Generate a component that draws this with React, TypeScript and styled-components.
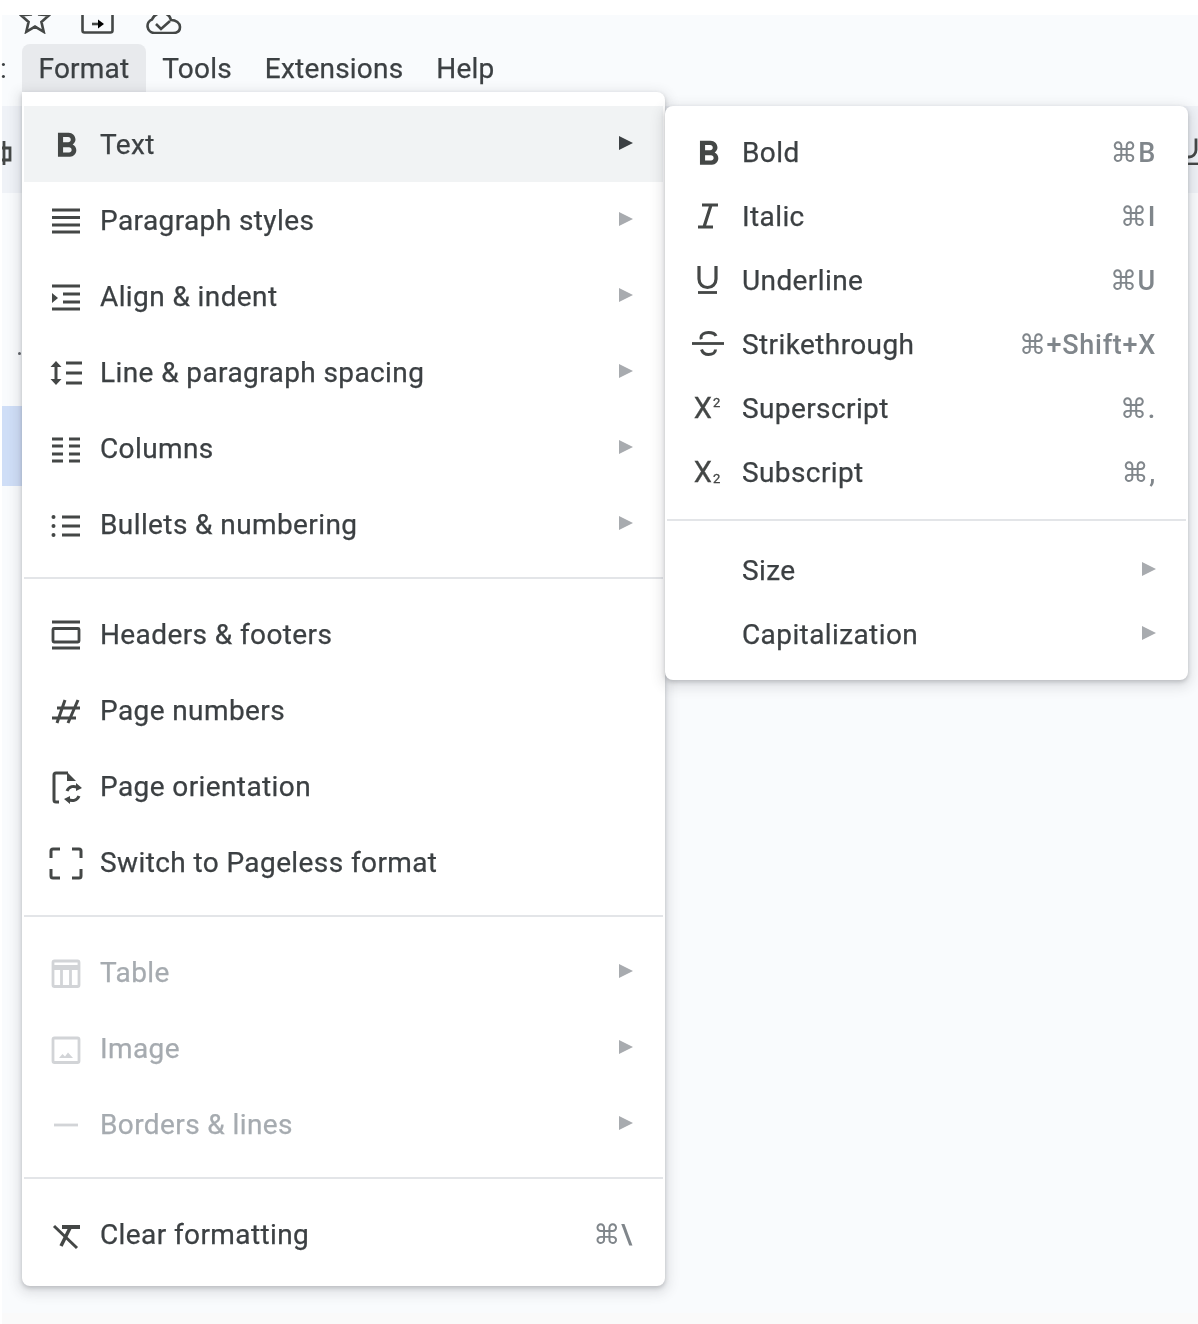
import type { ReactNode } from "react";
import styled, { createGlobalStyle } from "styled-components";
import { MdFormatBold } from "react-icons/md";

const GlobalStyle = createGlobalStyle`
  html, body {
    margin: 0;
    padding: 0;
    background: #ffffff;
  }
  #root {
    width: 1198px;
    height: 1324px;
    overflow: hidden;
  }
`;

type IconName =
  | "bold" | "paragraph" | "align" | "spacing" | "columns" | "bullets"
  | "headers" | "hash" | "orientation" | "pageless" | "table" | "image"
  | "border" | "clear" | "italic" | "underline" | "strike" | "sup" | "sub";

const drawings: Partial<Record<IconName, ReactNode>> = {
  paragraph: <path d="M6 10h28M6 17.5h28M6 25h28M6 32h28" />,
  align: (
    <>
      <path d="M6 10h28M17 18h17M17 26h17M6 33h28" />
      <path d="M6 17l6 5-6 5z" fill="currentColor" stroke="none" />
    </>
  ),
  spacing: (
    <>
      <path d="M20 11h16M20 21h16M20 31h16" />
      <path d="M10 13v16" strokeWidth="3" />
      <path d="M4.5 15L10 9l5.500 6zM4.500 27L10 33l5.500-6z" fill="currentColor" stroke="none" />
    </>
  ),
  columns: <path d="M6 11h11M6 18h11M6 26h11M6 33h11M23 11h11M23 18h11M23 26h11M23 33h11" />,
  bullets: (
    <>
      <path d="M16 13h18M16 22h18M16 31h18" />
      <g fill="currentColor" stroke="none">
        <circle cx="7.500" cy="13" r="2" />
        <circle cx="7.500" cy="22" r="2" />
        <circle cx="7.500" cy="31" r="2" />
      </g>
    </>
  ),
  headers: (
    <>
      <path d="M6 8h28M6 34h28" />
      <rect x="7" y="14.500" width="26" height="13.500" rx="1" />
    </>
  ),
  hash: <path d="M19 10l-8 23M32 10l-10 23M11 18h23M6 28h24" strokeWidth="3" />,
  orientation: (
    <>
      <path d="M13 36h-3a2 2 0 0 1-2-2V9a2 2 0 0 1 2-2h12" strokeWidth="3" />
      <path d="M21 6l9 9h-9z" fill="currentColor" stroke="none" />
      <path d="M21 25a7 7 0 0 1 11-3M33 30a7 7 0 0 1-11 3" strokeWidth="3" />
      <path d="M30 17l6 5-6 3zM24 38l-6-5 6-3z" fill="currentColor" stroke="none" />
    </>
  ),
  pageless: (
    <path
      d="M5 16V9a2 2 0 0 1 2-2h7M26 7h7a2 2 0 0 1 2 2v7M35 27v7a2 2 0 0 1-2 2h-7M14 36H7a2 2 0 0 1-2-2v-7"
      strokeWidth="3"
    />
  ),
  table: (
    <>
      <rect x="7" y="9" width="26" height="25.500" rx="1.500" />
      <path d="M7 15.500h26" strokeWidth="5" />
      <path d="M15.500 17v17M24.500 17v17" />
    </>
  ),
  image: (
    <>
      <rect x="7" y="10" width="26" height="24.500" rx="1.500" />
      <path d="M13 30l3.500-4 2.500 2.500 3-4 5 5.500z" fill="currentColor" stroke="none" />
    </>
  ),
  border: <path d="M8 21h24" />,
  clear: (
    <>
      <path d="M16 13h18" strokeWidth="4" />
      <path d="M8 12l23 22" strokeWidth="3" />
      <path d="M24 14l-9 18" strokeWidth="3.500" />
    </>
  ),
  italic: <path d="M14 9h16M10 31h15M23 9l-7 22" strokeWidth="3.200" />,
  underline: (
    <>
      <path d="M11 6v13a8.500 8.500 0 0 0 17 0V6" strokeWidth="3.200" />
      <path d="M10 32.500h19" strokeWidth="2.800" />
    </>
  ),
  strike: (
    <>
      <path d="M4 19.500h32" strokeWidth="2.800" />
      <path d="M28 12c-1-2.500-3.800-3.500-7.500-3.500-4.500 0-7.500 2-7.500 5 0 .6.100 1.200.3 1.700" strokeWidth="3" />
      <path d="M13.500 25.500c1 3 3.500 5 7 5 4.500 0 7-2.200 7-5" strokeWidth="3" />
    </>
  ),
};

function ItemIcon({ name }: { name: IconName }) {
  if (name === "bold") {
    return <BoldIcon size={41} />;
  }
  if (name === "sup") {
    return (
      <ScriptIcon>
        X<Raised>2</Raised>
      </ScriptIcon>
    );
  }
  if (name === "sub") {
    return (
      <ScriptIcon>
        X<Lowered>2</Lowered>
      </ScriptIcon>
    );
  }
  return <LineIcon viewBox="0 0 40 40">{drawings[name]}</LineIcon>;
}

type Item = {
  label: string;
  icon?: IconName;
  shortcut?: string;
  arrow?: boolean;
  disabled?: boolean;
  active?: boolean;
};

const formatGroups: Item[][] = [
  [
    { label: "Text", icon: "bold", arrow: true, active: true },
    { label: "Paragraph styles", icon: "paragraph", arrow: true },
    { label: "Align & indent", icon: "align", arrow: true },
    { label: "Line & paragraph spacing", icon: "spacing", arrow: true },
    { label: "Columns", icon: "columns", arrow: true },
    { label: "Bullets & numbering", icon: "bullets", arrow: true },
  ],
  [
    { label: "Headers & footers", icon: "headers" },
    { label: "Page numbers", icon: "hash" },
    { label: "Page orientation", icon: "orientation" },
    { label: "Switch to Pageless format", icon: "pageless" },
  ],
  [
    { label: "Table", icon: "table", arrow: true, disabled: true },
    { label: "Image", icon: "image", arrow: true, disabled: true },
    { label: "Borders & lines", icon: "border", arrow: true, disabled: true },
  ],
  [{ label: "Clear formatting", icon: "clear", shortcut: "⌘\\" }],
];

const textGroups: Item[][] = [
  [
    { label: "Bold", icon: "bold", shortcut: "⌘B" },
    { label: "Italic", icon: "italic", shortcut: "⌘I" },
    { label: "Underline", icon: "underline", shortcut: "⌘U" },
    { label: "Strikethrough", icon: "strike", shortcut: "⌘+Shift+X" },
    { label: "Superscript", icon: "sup", shortcut: "⌘." },
    { label: "Subscript", icon: "sub", shortcut: "⌘," },
  ],
  [
    { label: "Size", arrow: true },
    { label: "Capitalization", arrow: true },
  ],
];

function MenuRows({ groups, compact }: { groups: Item[][]; compact?: boolean }) {
  return (
    <>
      {groups.map((group, index) => (
        <div key={group[0].label}>
          {index > 0 && <Divider />}
          {group.map((item) => (
            <Row key={item.label} $compact={compact} $active={item.active} $disabled={item.disabled}>
              <IconSlot>{item.icon && <ItemIcon name={item.icon} />}</IconSlot>
              <Label>{item.label}</Label>
              {item.shortcut && <Shortcut>{item.shortcut}</Shortcut>}
              {item.arrow && <Arrow $active={item.active} />}
            </Row>
          ))}
        </div>
      ))}
    </>
  );
}

export default function App() {
  return (
    <>
      <GlobalStyle />
      <Page>
        <Frame>
          <TitleIcons>
            <TopIcon viewBox="0 0 32 32" width="32" height="32">
              <path d="M16 3l4 9.500 10 .8-7.600 6.600 2.300 9.900L16 24.600 7.300 29.800l2.300-9.900L2 13.300l10-.8z" />
            </TopIcon>
            <TopIcon viewBox="0 0 34 24" width="34" height="24">
              <rect x="2.500" y="-2" width="30" height="24.500" rx="2" />
              <path d="M12 14h9" />
              <path d="M18 9.500l6 4.500-6 4.500z" fill="currentColor" stroke="none" />
            </TopIcon>
            <TopIcon viewBox="0 0 40 24" width="40" height="24">
              <path d="M11 23a7 7 0 0 1-2-13.500C11 5 15 3 19 3c5 0 8 3 9 7 5 0 9 3 9 7s-3 6-7 6z" />
              <path d="M13 14l5 5 9-8" />
            </TopIcon>
          </TitleIcons>
          <MenuBar>
            <ClippedItem>:</ClippedItem>
            <MenuTab $open>Format</MenuTab>
            <MenuTab>Tools</MenuTab>
            <MenuTab>Extensions</MenuTab>
            <MenuTab>Help</MenuTab>
          </MenuBar>
          <Toolbar>
            <ToolGlyph viewBox="0 0 10 30" width="10" height="30">
              <path d="M2 6v24M-5 13h13v12H-5z" />
            </ToolGlyph>
            <ToolGlyph viewBox="0 0 10 30" width="10" height="30">
              <path d="M8 3.500V15a7 7 0 0 1-7 7H-2" />
              <path d="M-2 29h14" />
            </ToolGlyph>
          </Toolbar>
          <DocArea>
            <RulerDot />
            <Selection />
          </DocArea>
        </Frame>
        <BottomEdge />
        <FormatMenu>
          <MenuRows groups={formatGroups} />
        </FormatMenu>
        <TextMenu>
          <MenuRows groups={textGroups} compact />
        </TextMenu>
      </Page>
    </>
  );
}

const Page = styled.div`
  position: relative;
  width: 1198px;
  height: 1324px;
  display: flex;
  flex-direction: column;
  padding-top: 15px;
  box-sizing: border-box;
  background: #ffffff;
  font-family: Roboto, "DejaVu Sans", sans-serif;
  filter: blur(0.5px);
`;

const Frame = styled.div`
  flex: 1;
  margin-left: 2px;
  display: flex;
  flex-direction: column;
  min-height: 0;
  background: #f9fbfd;
`;

const BottomEdge = styled.div`
  height: 11px;
  margin-left: 2px;
  background: #fafafa;
`;

const TitleIcons = styled.div`
  height: 29px;
  box-sizing: border-box;
  padding: 0 0 10px 17px;
  display: flex;
  align-items: flex-end;
  gap: 29px;
  overflow: hidden;
  flex-shrink: 0;
`;

const TopIcon = styled.svg`
  display: block;
  flex-shrink: 0;
  fill: none;
  stroke: #444746;
  stroke-width: 2.600;
`;

const MenuBar = styled.div`
  height: 48px;
  display: flex;
  align-items: stretch;
  flex-shrink: 0;
`;

const ClippedItem = styled.div`
  width: 20px;
  font-size: 28px;
  line-height: 50px;
  color: #3c4043;
  margin-left: -2px;
  margin-right: 2px;
`;

const MenuTab = styled.div<{ $open?: boolean }>`
  padding: 0 16.500px;
  border-radius: 8px 8px 0 0;
  font-size: 28px;
  line-height: 50px;
  letter-spacing: 0.2px;
  color: #3c4043;
  -webkit-text-stroke: 0.25px currentColor;
  background: ${(p) => (p.$open ? "#e8eaed" : "transparent")};
`;

const Toolbar = styled.div`
  height: 87px;
  margin-top: 14px;
  display: flex;
  justify-content: space-between;
  align-items: center;
  flex-shrink: 0;
  background: #eff2f7;
`;

const ToolGlyph = styled.svg`
  display: block;
  fill: none;
  stroke: #444746;
  stroke-width: 2.800;
`;

const DocArea = styled.div`
  flex: 1;
  padding-top: 159px;
`;

const RulerDot = styled.div`
  width: 3px;
  height: 3px;
  margin-left: 16px;
  border-radius: 50%;
  background: #5f6368;
`;

const Selection = styled.div`
  width: 20px;
  height: 80px;
  margin-top: 51px;
  background: #cfdef7;
`;

const FloatingMenu = styled.div`
  position: absolute;
  box-sizing: border-box;
  padding: 14px 2px;
  background: #ffffff;
  box-shadow: 0 4px 12px 4px rgba(60, 64, 67, 0.13), 0 2px 4px rgba(60, 64, 67, 0.24);
`;

const FormatMenu = styled(FloatingMenu)`
  left: 22px;
  top: 92px;
  width: 643px;
  height: 1194px;
  border-radius: 0 8px 8px 8px;
`;

const TextMenu = styled(FloatingMenu)`
  left: 665px;
  top: 106px;
  width: 523px;
  height: 574px;
  border-radius: 8px;
`;

const Divider = styled.div`
  height: 2px;
  margin: 15px 0 17px;
  background: #e3e5e8;
`;

const Row = styled.div<{ $compact?: boolean; $active?: boolean; $disabled?: boolean }>`
  height: ${(p) => (p.$compact ? "64px" : "76px")};
  box-sizing: border-box;
  padding: 0 30px 0 ${(p) => (p.$compact ? "21px" : "22px")};
  display: flex;
  align-items: center;
  background: ${(p) => (p.$active ? "#f1f3f4" : "transparent")};
  color: ${(p) => (p.$disabled ? "#a6abb0" : "#3c4043")};

  svg,
  & > span:first-child > span {
    color: ${(p) => (p.$disabled ? "#d2d4d7" : "#444746")};
  }
`;

const IconSlot = styled.span`
  width: 40px;
  height: 40px;
  margin-right: 14px;
  display: flex;
  align-items: center;
  justify-content: center;
  flex-shrink: 0;
`;

const BoldIcon = styled(MdFormatBold)`
  display: block;
  flex-shrink: 0;
  margin-top: 4px;
`;

const LineIcon = styled.svg`
  display: block;
  width: 40px;
  height: 40px;
  fill: none;
  stroke: currentColor;
  stroke-width: 2.800;
`;

const ScriptIcon = styled.span`
  display: flex;
  align-items: center;
  font-size: 29px;
  line-height: 40px;
  margin-left: -2px;
  -webkit-text-stroke: 0.3px currentColor;
`;

const Raised = styled.span`
  font-size: 13px;
  line-height: 13px;
  margin: -12px 0 0 1px;
`;

const Lowered = styled.span`
  font-size: 13px;
  line-height: 13px;
  margin: 12px 0 0 1px;
`;

const Label = styled.span`
  flex: 1;
  font-size: 28px;
  line-height: 40px;
  letter-spacing: 0.4px;
  white-space: nowrap;
  margin-top: 1px;
  -webkit-text-stroke: 0.25px currentColor;
`;

const Shortcut = styled.span`
  font-size: 27px;
  font-weight: 500;
  line-height: 40px;
  letter-spacing: 0.7px;
  color: #80868b;
  white-space: nowrap;
  margin-top: 1px;
`;

const Arrow = styled.span<{ $active?: boolean }>`
  width: 0;
  height: 0;
  margin-top: -2px;
  border-style: solid;
  border-width: 7px 0 7px 14px;
  border-color: transparent transparent transparent ${(p) => (p.$active ? "#3c4043" : "#a8abaf")};
`;
